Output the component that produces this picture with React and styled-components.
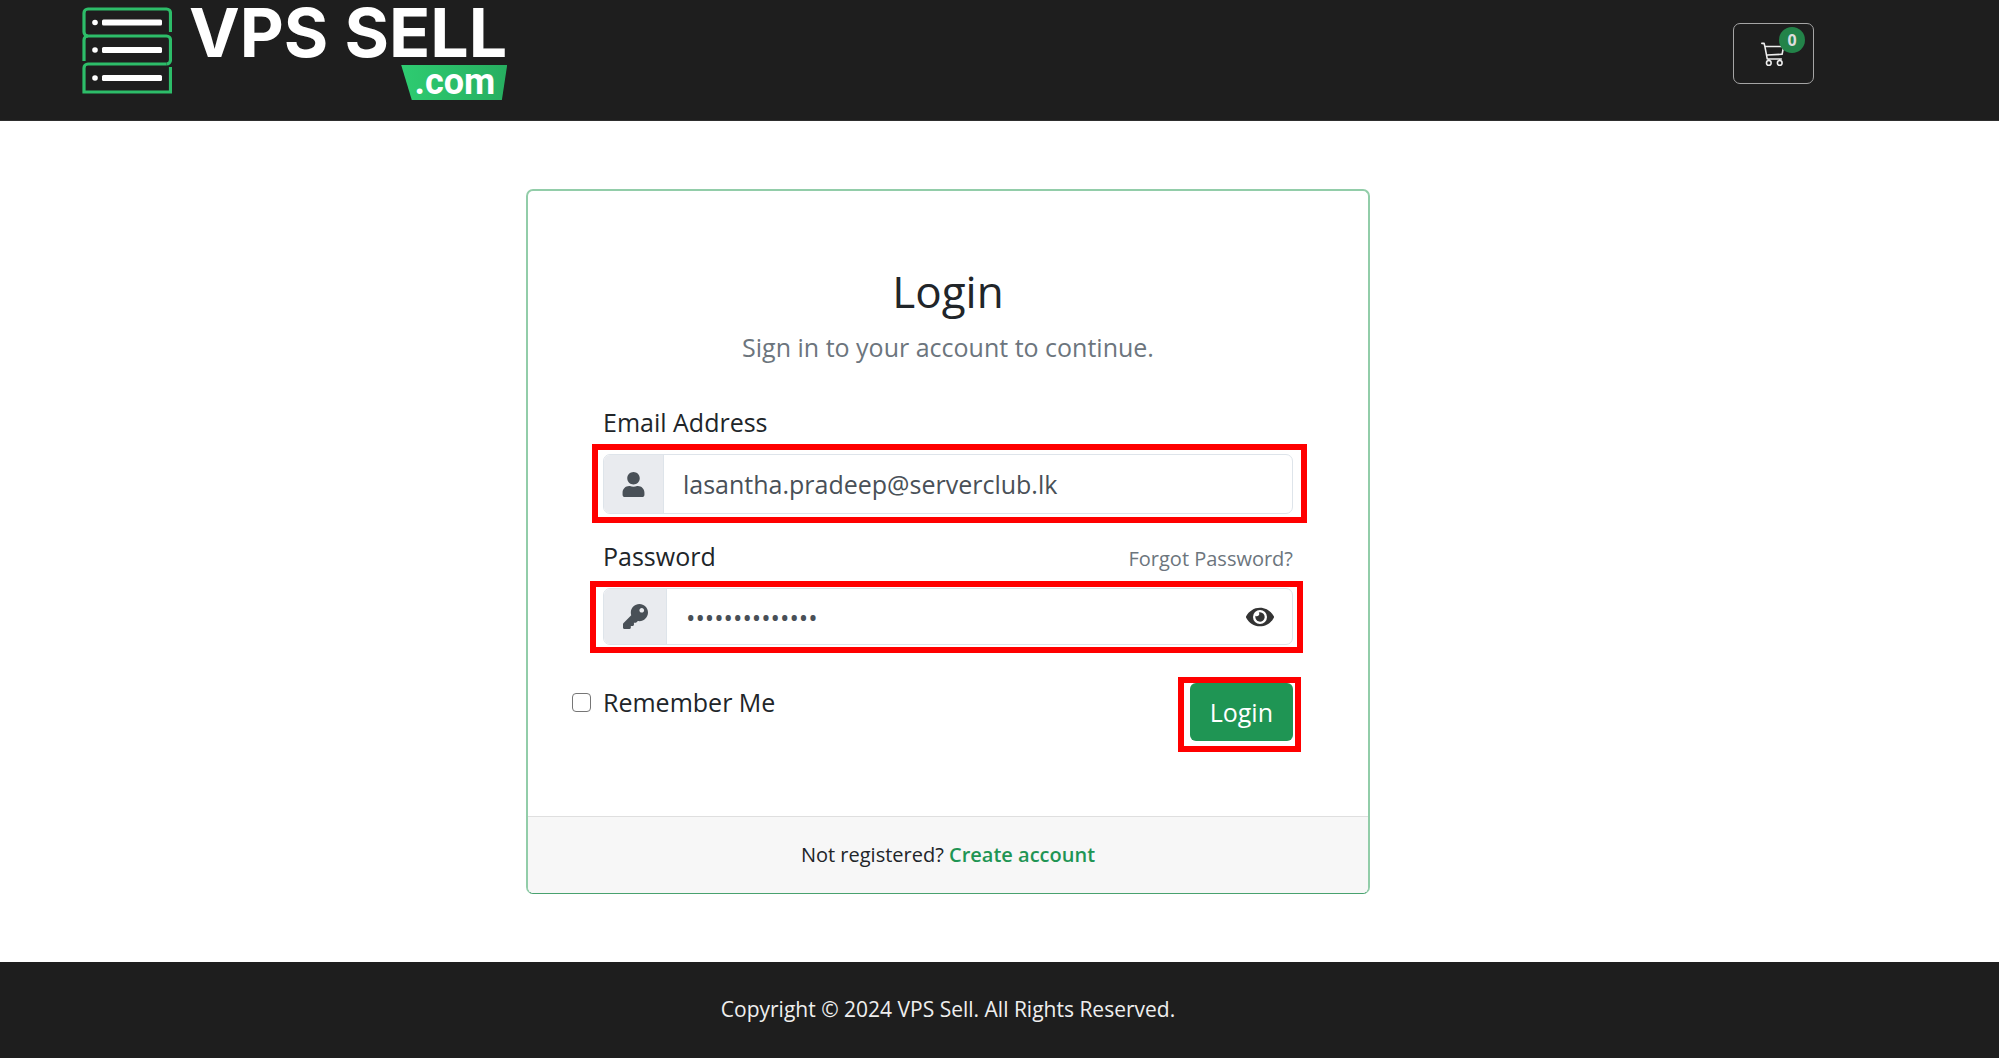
import React, { useState } from 'react';
import styled, { createGlobalStyle } from 'styled-components';
import { FaUser, FaKey, FaEye } from 'react-icons/fa';
import { BsCart3 } from 'react-icons/bs';

const Global = createGlobalStyle`
  * {
    box-sizing: border-box;
  }

  body {
    margin: 0;
    background: #fff;
    color: #212529;
    font-family: 'Open Sans', 'Noto Sans', sans-serif;
    font-size: 25px;
    line-height: 38px;
  }
`;

const Header = styled.header`
  display: flex;
  justify-content: space-between;
  align-items: flex-start;
  height: 121px;
  padding: 0 185px 0 82px;
  background: #1e1e1e;
  border-bottom: 1px solid #2e2e2e;
`;

const Brand = styled.a`
  display: flex;
  gap: 17px;
  color: white;
  text-decoration: none;
`;

const ServerIcon = styled.svg`
  width: 90px;
  height: 88px;
  margin-top: 7px;
`;

const BrandText = styled.span`
  display: flex;
  flex-direction: column;
  align-items: flex-end;
`;

const BrandName = styled.span`
  font-family: Inter, sans-serif;
  font-size: 68px;
  font-weight: 700;
  line-height: 65px;
`;

const BrandDomain = styled.span`
  width: 106px;
  height: 35px;
  padding-right: 12px;
  background: linear-gradient(90deg, #2ecc71, #27ae60);
  clip-path: polygon(0 0, 100% 0, 95% 100%, 10% 100%);
  font-family: Roboto, sans-serif;
  font-size: 36px;
  font-weight: 700;
  line-height: 34px;
  text-align: right;
`;

const CartButton = styled.button`
  position: relative;
  width: 81px;
  height: 61px;
  margin-top: 23px;
  padding: 0;
  background: transparent;
  border: 1px solid #a5a5a5;
  border-radius: 7px;
  color: #eee;
  cursor: pointer;

  & svg {
    display: block;
    margin: 0 auto;
  }
`;

const CartBadge = styled.span`
  position: absolute;
  top: 3px;
  right: 8px;
  width: 26px;
  height: 26px;
  border-radius: 13px;
  background: #238349;
  color: #ddd;
  font-family: 'Open Sans', sans-serif;
  font-size: 16px;
  font-weight: 700;
  line-height: 26px;
  text-align: center;
`;

const Main = styled.main`
  padding: 68px 103px 68px 0;
`;

const Card = styled.section`
  max-width: 844px;
  margin: 0 auto;
  border: 2px solid #92cda9;
  border-bottom: 1px solid #48a26f;
  border-radius: 7px;
  overflow: hidden;
`;

const CardBody = styled.form`
  padding: 75px;
`;

const Title = styled.h1`
  margin: 0 0 12px;
  font-size: 44px;
  font-weight: 400;
  line-height: 50px;
  text-align: center;
`;

const Lead = styled.p`
  margin: 0 0 37px;
  color: #6c757d;
  text-align: center;
`;

const Field = styled.div`
  margin-bottom: ${props => props.$gap}px;
`;

const LabelRow = styled.div`
  display: flex;
  justify-content: space-between;
  align-items: baseline;
  margin-bottom: 13px;
`;

const ForgotLink = styled.a`
  color: #6c757d;
  font-size: 20px;
  line-height: 30px;
  text-decoration: none;
`;

const InputGroup = styled.div`
  position: relative;
  display: flex;
  height: ${props => props.$height}px;
  border: 1px solid #dee4ea;
  border-radius: 7px;
`;

const Addon = styled.span`
  display: flex;
  justify-content: center;
  align-items: center;
  width: ${props => props.$width}px;
  background: #e9ebef;
  border-right: 1px solid #dee4ea;
  border-radius: 6px 0 0 6px;
  color: #495057;
`;

const Input = styled.input`
  flex: 1;
  min-width: 0;
  padding: 0 19px;
  background: transparent;
  border: 0;
  outline: none;
  color: #495057;
  font-family: inherit;
  font-size: 25px;
`;

const RevealButton = styled.button`
  display: flex;
  align-items: center;
  padding: 0 18px;
  background: transparent;
  border: 0;
  color: #333;
  cursor: pointer;
`;

// 강조 표시용 빨간 테두리
const Highlight = styled.span`
  position: absolute;
  inset: ${props => props.$inset};
  border: 6px solid #f00;
  pointer-events: none;
`;

const Actions = styled.div`
  display: flex;
  justify-content: space-between;
  align-items: flex-start;
`;

const Remember = styled.label`
  display: flex;
  align-items: center;
  gap: 12px;
  margin-left: -31px;
`;

const Checkbox = styled.input`
  appearance: none;
  width: 19px;
  height: 19px;
  margin: 0;
  background: white;
  border: 1px solid #767676;
  border-radius: 4px;

  &:checked {
    background: #1f9554;
  }
`;

const SubmitWrapper = styled.div`
  position: relative;
`;

const Submit = styled.button`
  display: block;
  height: 58px;
  padding: 0 20px;
  background: #1f9554;
  border: 0;
  border-radius: 6px;
  color: white;
  font-family: inherit;
  font-size: 25px;
  cursor: pointer;
`;

const CardFooter = styled.div`
  padding: 20px;
  background: #f7f7f7;
  border-top: 1px solid #dfdfdf;
  font-size: 20px;
  line-height: 36px;
  text-align: center;

  & a {
    color: #1f9554;
    font-weight: 600;
    text-decoration: none;
  }
`;

const Footer = styled.footer`
  padding: 28px 103px 30px 0;
  background: #1e1e1e;
  color: #eee;
  font-size: 21px;
  text-align: center;
`;

const App = () => {
  const [email, setEmail] = useState('lasantha.pradeep@serverclub.lk');
  const [password, setPassword] = useState('abcdefghijklmn');
  const [visible, setVisible] = useState(false);
  const [remember, setRemember] = useState(false);

  return (
    <>
      <Global />
      <Header>
        <Brand href="#">
          <ServerIcon viewBox="0 0 90 88" fill="none" aria-hidden="true">
            <g stroke="#2dbd69" strokeWidth="3.2">
              <path d="M88.500 25V6a4 4 0 0 0-4-4H6a4 4 0 0 0-4 4v19a4 4 0 0 0 4 4" />
              <path d="M2 54V33a4 4 0 0 1 4-4h78.500a4 4 0 0 1 4 4v20a4 4 0 0 1-4 4" />
              <path d="M88.500 60v25H2V61a4 4 0 0 1 4-4h78.500" />
            </g>
            {[15.500, 43, 71].map(y => (
              <g key={y}>
                <circle cx="13" cy={y} r="2.800" fill="white" />
                <rect x="20" y={y - 3} width="60" height="6" rx="1.500" fill="white" />
              </g>
            ))}
          </ServerIcon>
          <BrandText>
            <BrandName>VPS SELL</BrandName>
            <BrandDomain>.com</BrandDomain>
          </BrandText>
        </Brand>
        <CartButton type="button" aria-label="Cart">
          <BsCart3 size={25} />
          <CartBadge>0</CartBadge>
        </CartButton>
      </Header>
      <Main>
        <Card>
          <CardBody onSubmit={e => e.preventDefault()}>
            <Title>Login</Title>
            <Lead>Sign in to your account to continue.</Lead>
            <Field $gap={23}>
              <LabelRow>
                <label htmlFor="email">Email Address</label>
              </LabelRow>
              <InputGroup $height={60}>
                <Addon $width={60}><FaUser size={25} /></Addon>
                <Input
                  id="email"
                  type="email"
                  value={email}
                  onChange={e => setEmail(e.target.value)}
                />
                <Highlight $inset="-11px -15px -10px -12px" />
              </InputGroup>
            </Field>
            <Field $gap={38}>
              <LabelRow>
                <label htmlFor="password">Password</label>
                <ForgotLink href="#">Forgot Password?</ForgotLink>
              </LabelRow>
              <InputGroup $height={57}>
                <Addon $width={63}><FaKey size={25} /></Addon>
                <Input
                  id="password"
                  type={visible ? 'text' : 'password'}
                  value={password}
                  onChange={e => setPassword(e.target.value)}
                />
                <RevealButton
                  type="button"
                  aria-label="Show password"
                  onClick={() => setVisible(!visible)}
                >
                  <FaEye size={28} />
                </RevealButton>
                <Highlight $inset="-8px -11px -9px -14px" />
              </InputGroup>
            </Field>
            <Actions>
              <Remember>
                <Checkbox
                  type="checkbox"
                  checked={remember}
                  onChange={e => setRemember(e.target.checked)}
                />
                Remember Me
              </Remember>
              <SubmitWrapper>
                <Submit type="submit">Login</Submit>
                <Highlight $inset="-6px -8px -11px -12px" />
              </SubmitWrapper>
            </Actions>
          </CardBody>
          <CardFooter>
            Not registered?
            {' '}
            <a href="#">Create account</a>
          </CardFooter>
        </Card>
      </Main>
      <Footer>Copyright © 2024 VPS Sell. All Rights Reserved.</Footer>
    </>
  );
};

export default App;
